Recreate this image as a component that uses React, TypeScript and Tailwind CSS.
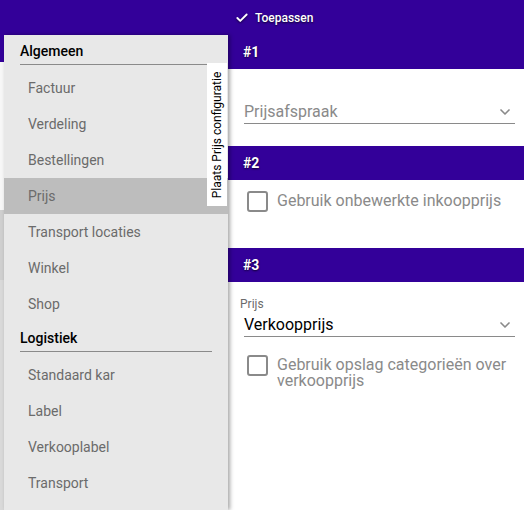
import { Check, ChevronDown } from 'lucide-react';

const algemeen = ['Factuur', 'Verdeling', 'Bestellingen', 'Prijs', 'Transport locaties', 'Winkel', 'Shop'];
const logistiek = ['Standaard kar', 'Label', 'Verkooplabel', 'Transport'];

function Heading({ label }: { label: string }) {
  return (
    <div className="mx-4 h-[30px] pt-[6px] border-b border-[#8a8a8a] text-[14px] leading-[20px] font-medium text-black">
      {label}
    </div>
  );
}

function Item({ label, active }: { label: string; active?: boolean }) {
  return (
    <div
      className={`h-[36px] flex items-center pl-6 text-[14px] text-[#6b6b6b] ${
        active ? 'bg-[#bdbdbd]' : ''
      }`}
    >
      {label}
    </div>
  );
}

function SectionHeader({ label }: { label: string }) {
  return (
    <div className="h-[34px] bg-[#330099] flex items-center pl-[15px] text-[14px] font-bold text-white [text-shadow:0_1px_2px_rgba(0,0,0,0.7)]">
      {label}
    </div>
  );
}

function CheckboxRow({ label }: { label: string }) {
  return (
    <div className="flex items-start gap-[9px] pl-[19px]">
      <div className="mt-[1px] w-[21px] h-[21px] shrink-0 rounded-[3px] border-2 border-[#8a8a8a] bg-white" />
      <div className="text-[16px] leading-[16px] text-[#8a8a8a] pt-[3px]">{label}</div>
    </div>
  );
}

export default function App() {
  return (
    <div className="w-[524px] h-[510px] overflow-hidden bg-white flex flex-col font-['Roboto',sans-serif]">
      <div className="h-[35px] shrink-0 bg-[#330099] flex items-center">
        <div className="ml-[235px] flex items-center gap-[6px] text-white text-[12px] font-medium [text-shadow:0_1px_2px_rgba(0,0,0,0.7)]">
          <Check size={14} strokeWidth={3.2} className="drop-shadow-[0_1px_1px_rgba(0,0,0,0.6)]" />
          <span>Toepassen</span>
        </div>
      </div>

      <div className="flex flex-1">
        {/* page behind the drawer */}
        <div className="w-[4px] flex flex-col">
          <div className="h-[27px] bg-[#330099]" />
          <div className="h-[148px] bg-[#f7f7f7]" />
          <div className="h-[70px] bg-[#cfcfcf]" />
          <div className="flex-1 bg-[#d9d9d9]" />
        </div>

        <div className="relative z-10 w-[224px] bg-[#e8e8e8] shadow-[2px_0_4px_rgba(0,0,0,0.35)]">
          <Heading label="Algemeen" />
          <div className="mt-[5px]">
            {algemeen.map((label) => (
              <Item key={label} label={label} active={label === 'Prijs'} />
            ))}
          </div>
          <Heading label="Logistiek" />
          <div className="mt-[5px]">
            {logistiek.map((label) => (
              <Item key={label} label={label} />
            ))}
          </div>

          <div className="absolute left-[203px] top-[28px] w-[20px] h-[143px] bg-white flex items-center justify-center">
            <div className="-rotate-90 whitespace-nowrap text-[12px] text-black">Plaats Prijs configuratie</div>
          </div>
        </div>

        <div className="flex-1 flex flex-col">
          <SectionHeader label="#1" />
          <div className="h-[77px] pt-[32px] pl-[16px] pr-[9px]">
            <div className="flex items-center justify-between h-[23px] border-b border-[#8a8a8a] text-[16px] text-[#8a8a8a]">
              <span>Prijsafspraak</span>
              <ChevronDown size={16} strokeWidth={2.5} className="text-[#8a8a8a] mr-[2px]" />
            </div>
          </div>

          <SectionHeader label="#2" />
          <div className="h-[68px] pt-[10px]">
            <CheckboxRow label="Gebruik onbewerkte inkoopprijs" />
          </div>

          <SectionHeader label="#3" />
          <div className="pt-[14px]">
            <div className="pl-[12px] text-[12px] leading-[16px] text-[#6b6b6b]">Prijs</div>
            <div className="ml-[16px] mr-[9px] mt-[1px] flex items-center justify-between h-[24px] border-b border-[#8a8a8a] text-[16px] text-black">
              <span>Verkoopprijs</span>
              <ChevronDown size={16} strokeWidth={2.5} className="text-[#8a8a8a] mr-[2px]" />
            </div>
            <div className="mt-[17px]">
              <CheckboxRow label="Gebruik opslag categorieën over verkoopprijs" />
            </div>
          </div>
        </div>
      </div>
    </div>
  );
}
